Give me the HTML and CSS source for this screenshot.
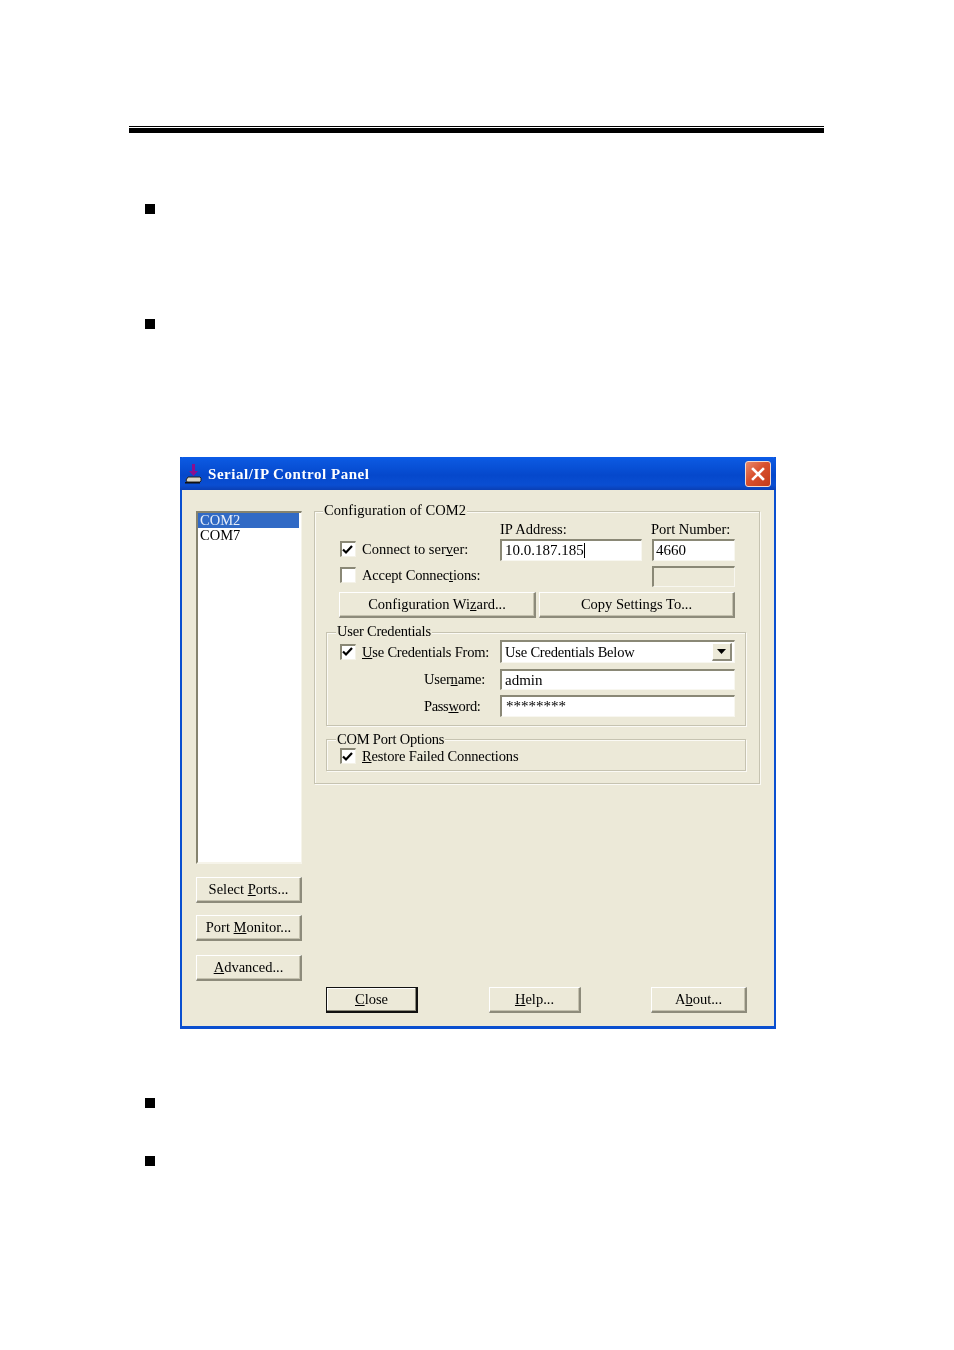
FILE: index.html
```html
<!DOCTYPE html>
<html lang="en">
<head>
<meta charset="utf-8">
<title>Serial/IP Control Panel</title>
<link rel="stylesheet" href="styles.css">
</head>
<body>
<main class="page">
  <div class="rule"></div>
  <div class="bullet b1"></div>
  <div class="bullet b2"></div>

  <section class="window">
    <header class="titlebar">
      <svg class="app-icon" width="18" height="20" viewBox="0 0 18 20">
        <path d="M7 0h3v7h3l-4.500 5L4 7h3z" fill="#8a0f8f"/>
        <path d="M1 16l2-3h12l1 1v3l-1 1H2z" fill="#d9d6c8" stroke="#222" stroke-width="1"/>
        <path d="M0 18h15v1.500H0z" fill="#111"/>
      </svg>
      <span class="title">Serial/IP Control Panel</span>
      <div class="close-x">
        <svg width="16" height="16" viewBox="0 0 16 16"><path d="M3 3l10 10M13 3L3 13" stroke="#fff" stroke-width="2.600" stroke-linecap="square"/></svg>
      </div>
    </header>

    <div class="client">
      <aside class="left">
        <div class="list">
          <div class="item selected">COM2</div>
          <div class="item">COM7</div>
        </div>
        <div class="btn side s1"><span>Select <u>P</u>orts...</span></div>
        <div class="btn side s2"><span>Port <u>M</u>onitor...</span></div>
        <div class="btn side s3"><span><u>A</u>dvanced...</span></div>
      </aside>

      <div class="right">
        <div class="group config">
          <span class="legend">Configuration of COM2</span>
          <div class="top-grid">
            <span class="label ip-label">IP Address:</span>
            <span class="label port-label">Port Number:</span>

            <div class="check-row connect">
              <span class="check"><svg width="12" height="12" viewBox="0 0 12 12"><path d="M1 5.500l3 3 6-6.500" fill="none" stroke="#000" stroke-width="2.200"/></svg></span>
              <span class="label">Connect to ser<u>v</u>er:</span>
            </div>
            <div class="field ip"><span class="caret">10.0.187.185</span></div>
            <div class="field port">4660</div>

            <div class="check-row accept">
              <span class="check"></span>
              <span class="label tight-1">Accept Connec<u>t</u>ions:</span>
            </div>
            <div class="field port disabled"></div>

            <div class="btn-row">
              <div class="btn wizard"><span>Configuration Wi<u>z</u>ard...</span></div>
              <div class="btn copy"><span>Copy Settings To...</span></div>
            </div>
          </div>

          <div class="group creds">
            <span class="legend tight-2">User Credentials</span>
            <div class="creds-grid">
              <div class="check-row">
                <span class="check"><svg width="12" height="12" viewBox="0 0 12 12"><path d="M1 5.500l3 3 6-6.500" fill="none" stroke="#000" stroke-width="2.200"/></svg></span>
                <span class="label tight-2"><u>U</u>se Credentials From:</span>
              </div>
              <div class="field combo">
                <span class="tight-2">Use Credentials Below</span>
                <span class="combo-btn"><svg width="9" height="5" viewBox="0 0 9 5"><path d="M0 0h9L4.500 5z" fill="#000"/></svg></span>
              </div>
              <span class="label field-label tight-2">User<u>n</u>ame:</span>
              <div class="field cred">admin</div>
              <span class="label field-label tight-3">Pass<u>w</u>ord:</span>
              <div class="field cred pass">********</div>
            </div>
          </div>

          <div class="group options">
            <span class="legend tight-2">COM Port Options</span>
            <div class="check-row">
              <span class="check"><svg width="12" height="12" viewBox="0 0 12 12"><path d="M1 5.500l3 3 6-6.500" fill="none" stroke="#000" stroke-width="2.200"/></svg></span>
              <span class="label tight-1"><u>R</u>estore Failed Connections</span>
            </div>
          </div>
        </div>

        <div class="footer">
          <div class="btn default"><span><u>C</u>lose</span></div>
          <div class="btn help"><span><u>H</u>elp...</span></div>
          <div class="btn about"><span>A<u>b</u>out...</span></div>
        </div>
      </div>
    </div>
  </section>

  <div class="bullet b3"></div>
  <div class="bullet b4"></div>
</main>
</body>
</html>
```

FILE: styles.css
```css
* { box-sizing: border-box; }
html, body { margin: 0; background: #fff; }
body { font-family: "Liberation Serif", serif; font-size: 14.500px; color: #000; }
.page { width: 954px; height: 1350px; overflow: hidden; padding-top: 126px; }

.rule { width: 695px; height: 7px; margin-left: 129px; border-top: 1px solid #000; border-bottom: 5px solid #000; }
.bullet { width: 10px; height: 10px; margin-left: 145px; background: #000; }
.b1 { margin-top: 71px; }
.b2 { margin-top: 105px; }
.b3 { margin-top: 69px; }
.b4 { margin-top: 48px; }

.tight-1 { letter-spacing: -0.15px; }
.tight-2 { letter-spacing: -0.2px; }
.tight-3 { letter-spacing: -0.35px; }

.window { width: 596px; height: 572px; margin: 128px 0 0 180px; background: #ECE9D8; border: 2px solid #0A4FD0; border-top: 0; border-bottom-width: 3px; filter: blur(0.4px); }
.titlebar { display: flex; align-items: center; height: 33px; margin: 0 -2px; padding: 0 5px; border-radius: 3px 3px 0 0;
  background: linear-gradient(180deg, #0A5BE8 0%, #0B57DE 12%, #0548CC 55%, #0A4ED2 85%, #0A3FB4 100%); }
.app-icon { flex: none; margin-top: 1px; }
.title { margin: 1px 0 0 5px; color: #fff; font-weight: bold; font-size: 15px; letter-spacing: 0.55px; }
.close-x { display: flex; align-items: center; justify-content: center; width: 26px; height: 26px; margin-left: auto; border: 1px solid #F3D9CE; border-radius: 3px;
  background: linear-gradient(135deg, #E88A6C 0%, #D9502E 45%, #C23A18 100%); }

.client { display: flex; padding: 21px 0 0 14px; }
.left { width: 106px; flex: none; }
.list { height: 353px; padding: 0 2px 0 0; background: #fff; border: 2px solid #85836F; border-right: 1px solid #F6F4EA; border-bottom: 2px solid #F6F4EA; }
.item { height: 15px; line-height: 15px; padding-left: 2px; }
.selected { background: #316AC5; color: #E8EEF8; }

.btn { display: flex; align-items: center; justify-content: center; height: 26px; padding-bottom: 1px; background: #ECE9D8; border-style: solid; border-width: 1px 2px 2px 1px; border-color: #FFFFFF #8D8B7B #8D8B7B #FFFFFF; box-shadow: inset -1px -1px 0 #C4C1AE; white-space: nowrap; }
.side { width: 106px; }
.s1 { margin-top: 13px; }
.s2 { margin-top: 12px; }
.s3 { margin-top: 14px; }

.right { width: 446px; margin-left: 12px; }
.group { position: relative; border: 1px solid #C6C3B1; box-shadow: 1px 1px 0 #FBFAF5, inset 1px 1px 0 #FBFAF5; }
.legend { position: absolute; top: -10px; left: 8px; padding: 0 1px; height: 16px; line-height: 16px; background: #ECE9D8; white-space: nowrap; }
.config { height: 273px; padding-top: 10px; }
.config > .legend { letter-spacing: 0.05px; }
.options > .legend { top: -9px; }
.creds > .legend, .options > .legend { left: 9px; }

.top-grid { display: grid; margin-left: 25px; grid-template-columns: 160px 152px 83px; grid-template-rows: 17px 22px 26px 31px; }
.label { white-space: nowrap; line-height: 16px; }
.ip-label { grid-column: 2; margin-top: -1px; }
.port-label { grid-column: 3; margin: -1px 0 0 -1px; }
.check-row { display: flex; align-items: center; gap: 6px; }
.connect { padding-bottom: 2px; }
.accept { grid-column: 1; align-self: end; height: 21px; padding-bottom: 3px; }
.check { display: flex; align-items: center; justify-content: flex-start; flex: none; width: 16px; height: 16px; background: #fff; border: 2px solid #8A8876; border-right: 1px solid #F4F2E8; border-bottom: 1px solid #F4F2E8; }

.field { display: flex; align-items: center; padding-left: 3px; height: 22px; font-size: 15px; background: #fff; border: 2px solid #8A8876; border-right: 1px solid #F8F7F0; border-bottom: 1px solid #F8F7F0; white-space: nowrap; }
.ip { width: 142px; }
.port { grid-column: 3; width: 83px; padding-left: 2px; }
.caret { border-right: 1px solid #000; line-height: 15px; }
.disabled { align-self: end; height: 21px; background: #ECE9D8; }

.btn-row { grid-column: 1 / 4; align-self: end; display: flex; gap: 3px; margin-left: -1px; }
.wizard { width: 197px; }
.copy { width: 196px; }

.creds { width: 420px; height: 94px; margin: 14px 0 0 11px; padding: 7px 0 0 13px; }
.creds-grid { display: grid; grid-template-columns: 160px 235px; grid-template-rows: 23px 27px 27px; }
.combo { height: 23px; justify-content: space-between; padding-right: 2px; font-size: 14.500px; }
.combo-btn { display: flex; align-items: center; justify-content: center; width: 20px; height: 18px; background: #ECE9D8; border-style: solid; border-width: 1px 2px 2px 1px; border-color: #fff #8D8B7B #8D8B7B #fff; }
.field-label { align-self: end; margin: 0 0 3px 84px; }
.cred { align-self: end; height: 21px; }
.pass { align-items: flex-start; height: 22px; padding: 3px 0 0 4px; line-height: 13px; }

.options { width: 420px; height: 32px; margin: 13px 0 0 11px; padding: 8px 0 0 13px; }

.footer { display: flex; margin-top: 203px; padding-left: 12px; }
.default { width: 92px; border: 1px solid #111; border-width: 1px 2px 2px 1px; box-shadow: inset -1px -1px 0 #8D8B7B, inset 1px 1px 0 #fff; }
.help { width: 92px; margin-left: 71px; }
.about { width: 96px; margin-left: 70px; }
```
